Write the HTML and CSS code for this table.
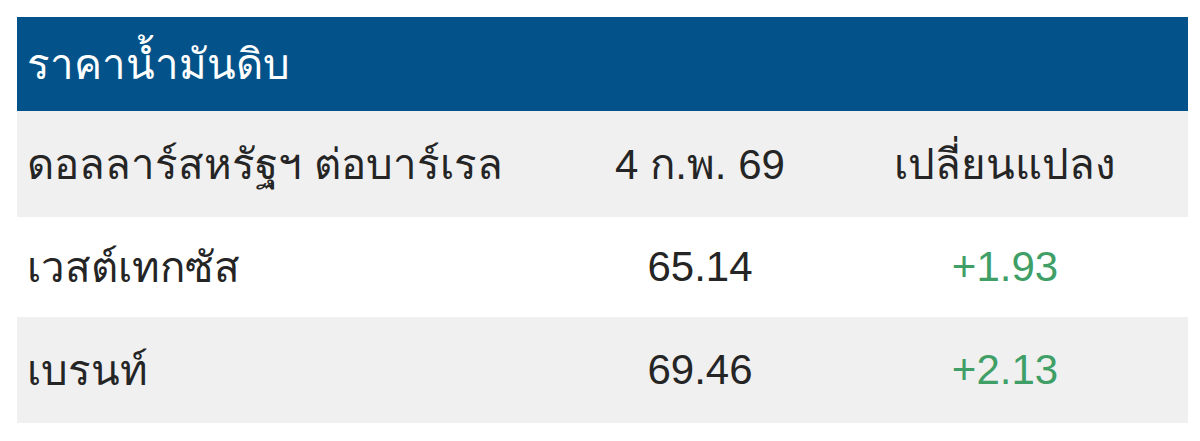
FILE: index.html
```html
<!DOCTYPE html>
<html lang="th">
<head>
<meta charset="utf-8">
<link rel="stylesheet" href="styles.css">
</head>
<body>
<div class="box">
  <div class="title">ราคาน้ำมันดิบ</div>
  <div class="row head">
    <div class="c1">ดอลลาร์สหรัฐฯ ต่อบาร์เรล</div>
    <div class="c2">4 ก.พ. 69</div>
    <div class="c3">เปลี่ยนแปลง</div>
  </div>
  <div class="row r1">
    <div class="c1">เวสต์เทกซัส</div>
    <div class="c2">65.14</div>
    <div class="c3 up">+1.93</div>
  </div>
  <div class="row r2">
    <div class="c1">เบรนท์</div>
    <div class="c2">69.46</div>
    <div class="c3 up">+2.13</div>
  </div>
</div>
</body>
</html>
```

FILE: styles.css
```css
html, body {
  margin: 0;
  padding: 0;
  background: #ffffff;
}
body {
  font-family: "Liberation Sans", "Noto Sans", "DejaVu Sans", sans-serif;
  color: #252525;
}
.box {
  margin: 17px 12px 0 17px;
  width: 1171px;
}
.title {
  height: 94px;
  background: #03538a;
  color: #ffffff;
  font-size: 42px;
  display: flex;
  align-items: center;
  padding-left: 10px;
}
.row {
  display: grid;
  grid-template-columns: 561px 244px 366px;
  align-items: center;
  font-size: 42px;
}
.head { height: 106px; background: #f0f0f0; }
.r1 { height: 100px; background: #ffffff; }
.r2 { height: 106px; background: #f0f0f0; }
.c1 { padding-left: 10px; }
.c2, .c3 { text-align: center; }
.up { color: #3f9f66; }
```
